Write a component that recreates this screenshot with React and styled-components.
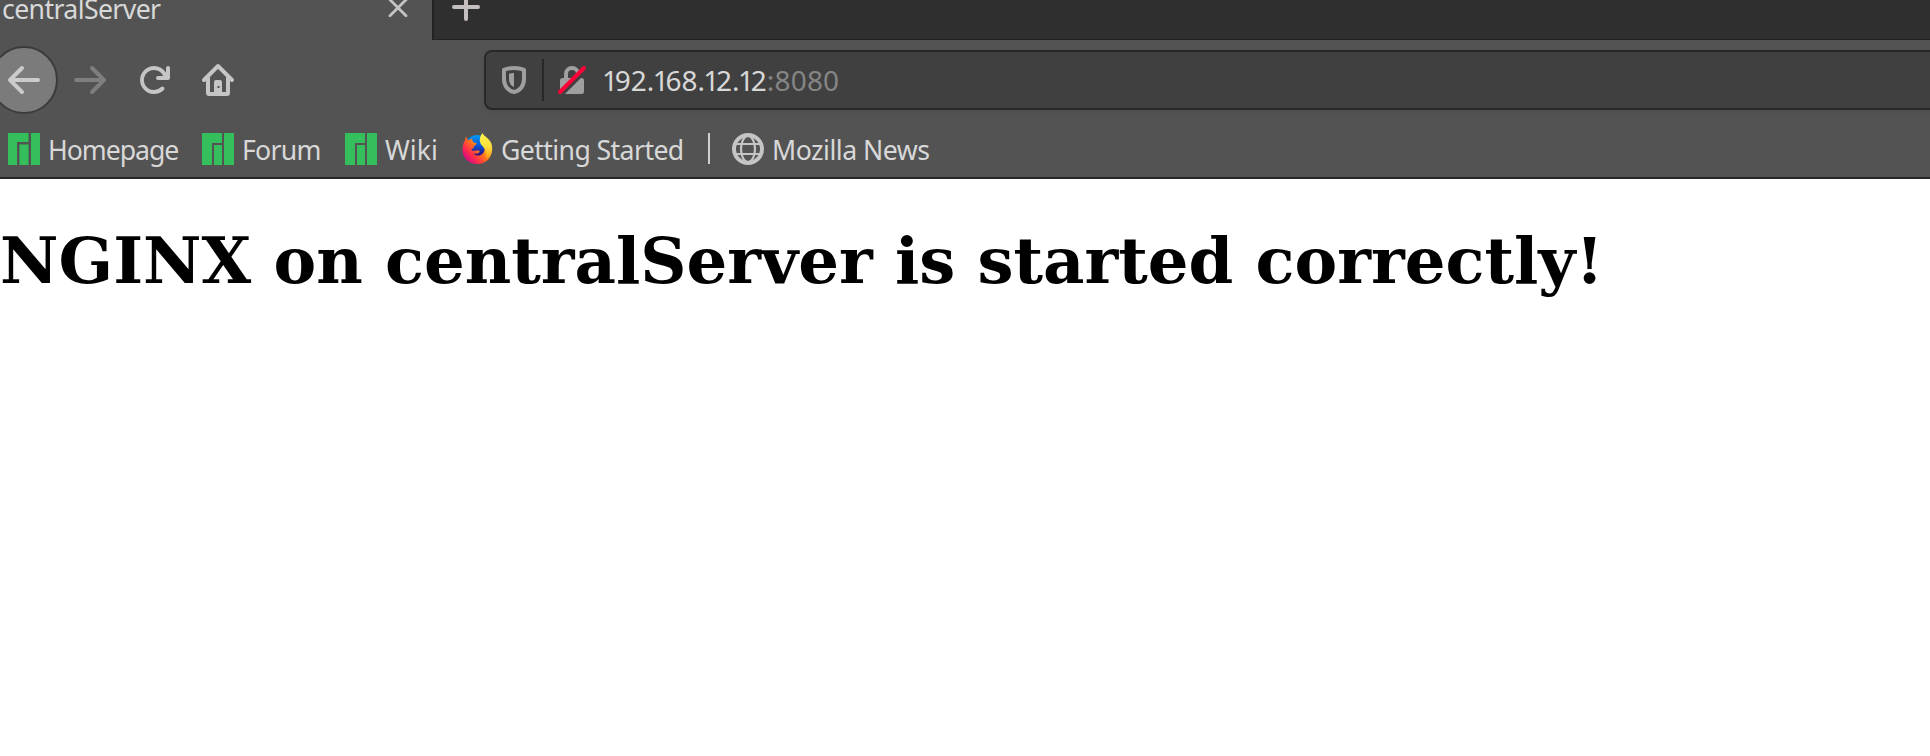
import React from 'react';
import styled, { createGlobalStyle } from 'styled-components';

const Global = createGlobalStyle`
  html, body { margin: 0; background: #fff; overflow: hidden; }
  * { box-sizing: border-box; }
`;

const Window = styled.div`
  width: 100%;
  height: 756px;
  overflow: hidden;
  background: #fff;
  font-family: "Noto Sans", "DejaVu Sans", sans-serif;
  color: #d8d8d8;
`;
const TabStrip = styled.div`
  display: flex;
  height: 40px;
  background: #2f2f2f;
`;
const ActiveTab = styled.div`
  display: flex;
  justify-content: space-between;
  width: 432px;
  height: 40px;
  padding: 0 24px 0 2px;
  background: #535353;
`;
const TabTitle = styled.span`
  font-size: 26.67px;
  line-height: 36px;
  margin-top: -9px;
  letter-spacing: -0.62px;
`;
const StripRest = styled.div`
  flex: 1;
  height: 40px;
  padding-left: 18px;
  border-left: 2px solid #222;
  border-bottom: 1px solid #222;
`;
const Icon = styled.svg`
  display: block;
  flex: none;
  overflow: visible;
`;
const NavBar = styled.div`
  display: flex;
  align-items: center;
  height: 80px;
  background: #535353;
`;
const NavButtons = styled.div`
  display: flex;
  align-items: center;
  width: 484px;
  flex: none;
`;
const BackButton = styled.div`
  display: flex;
  align-items: center;
  justify-content: center;
  flex: none;
  width: 68px;
  height: 68px;
  margin-left: -10px;
  border: 2px solid #3b3b3b;
  border-radius: 50%;
  background: #7b7b7b;
`;
const NavButton = styled.div`
  width: 32px;
  margin-left: ${p => p.$gap}px;
`;
const UrlBar = styled.div`
  display: flex;
  align-items: center;
  flex: 1;
  height: 60px;
  margin-right: -12px;
  padding-left: 14px;
  border: 2px solid #282828;
  border-radius: 8px;
  background: #404040;
  box-shadow: 0 2px 8px rgba(0, 0, 0, 0.06);
`;
const UrlDivider = styled.div`
  width: 2px;
  height: 42px;
  margin: 0 12px 0 14px;
  background: #282828;
`;
const Address = styled.div`
  margin-left: 14px;
  font-size: 28px;
  line-height: 40px;
  white-space: nowrap;
`;
const Kern = styled.span`
  letter-spacing: ${p => p.$by}px;
`;
const Port = styled.span`
  color: #858585;
  letter-spacing: 0.2px;
`;
const Bookmarks = styled.div`
  display: flex;
  align-items: center;
  height: 59px;
  padding: 0 0 0 8px;
  border-bottom: 2px solid #272727;
  background: #535353;
`;
const Bookmark = styled.div`
  display: flex;
  align-items: center;
  flex: none;
  width: ${p => p.$width}px;
  height: 36px;
`;
const BookmarkLabel = styled.span`
  margin-left: 8px;
  padding-top: 2px;
  font-size: 26.67px;
  line-height: 36px;
  letter-spacing: ${p => p.$spacing || 0}px;
  white-space: nowrap;
`;
const BookmarkDivider = styled.div`
  width: 2px;
  height: 31px;
  margin-right: 22px;
  background: #d0d0d0;
`;
const Content = styled.main`
  padding-top: 44px;
`;
const Heading = styled.h1`
  margin: 0;
  color: #000;
  font: bold 64px/75px "DejaVu Serif", serif;
  white-space: nowrap;
`;

const ARROW = 'M15 7H3.414l4.293-4.293a1 1 0 0 0-1.414-1.414l-6 6a1 1 0 0 0 0 1.414l6 6a1 1 0 0 0 1.414-1.414L3.414 9H15a1 1 0 0 0 0-2z';

const Manjaro = ({ soft }) => (
  <Icon width="32" height="32" viewBox="0 0 32 32" fill="#35bf5c" shapeRendering="crispEdges">
    {soft ? (
      <>
        <path d="M11 11h10v21H11zM20 0h1v9h-1z" fill="#3f8f55" />
        <path d="M0 0h20v9H9v23H0zM12 12h8v20h-8zM23 0h9v32h-9z" />
      </>
    ) : (
      <path d="M0 0h20v10H10v22H0zM12 12h8v20h-8zM22 0h10v32H22z" />
    )}
  </Icon>
);

const Firefox = () => (
  <Icon width="32" height="32" viewBox="0 0 32 32">
    <defs>
      <linearGradient id="body" x1="28" y1="5" x2="4" y2="27" gradientUnits="userSpaceOnUse">
        <stop offset="0" stopColor="#fff44f" />
        <stop offset=".3" stopColor="#ffb21c" />
        <stop offset=".52" stopColor="#ff6b20" />
        <stop offset=".75" stopColor="#ff2a4e" />
        <stop offset="1" stopColor="#d0068c" />
      </linearGradient>
      <linearGradient id="globe" x1="19" y1="2" x2="17" y2="22" gradientUnits="userSpaceOnUse">
        <stop offset="0" stopColor="#009ff0" />
        <stop offset=".45" stopColor="#0560e0" />
        <stop offset="1" stopColor="#2a1080" />
      </linearGradient>
      <linearGradient id="flame" x1="24" y1="1" x2="26" y2="26" gradientUnits="userSpaceOnUse">
        <stop offset="0" stopColor="#fff44f" />
        <stop offset=".5" stopColor="#ffe03a" />
        <stop offset="1" stopColor="#ff9a16" />
      </linearGradient>
    </defs>
    <circle cx="16" cy="14.500" r="12.500" fill="url(#globe)" />
    <path d="M1.500 17C1.500 13 2.500 9.500 4 7.500C4.100 5.800 4.600 4.500 5.500 3.500C5.600 5.300 6.200 6.400 7.200 7.200C8.500 6.500 10 6.500 11.300 5.300C11 7 11.500 8.500 12.500 9.500L15.500 10C15.600 11.800 14 12.700 12.700 13.400L12.900 15.700C11.300 15.200 9.900 16 10.700 17.200C12.500 18.700 15 17 18.300 17.800C19.300 18.300 18.500 20 16.500 20.500C14.500 21 13 20.500 12 20C14 22.500 17 23.200 20 22C24 20 24.500 15 22.500 11L31 13C32.500 23 26 31 16.500 31C8 31 1.500 25 1.500 17z" fill="url(#body)" />
    <path d="M21.500 0C22.800 3.500 29 5.500 30.500 11C31.800 16 30 22 25.500 25.500C26 19 24 15.500 21 12.500C18 9 18 4.500 21.500 0z" fill="url(#flame)" />
  </Icon>
);

const Globe = () => (
  <Icon width="32" height="32" viewBox="0 0 32 32" fill="none" stroke="#c5c5c5">
    <circle cx="16" cy="16" r="14" strokeWidth="4" />
    <ellipse cx="16" cy="16" rx="7" ry="13" strokeWidth="2.200" />
    <path d="M3 11h26M3 21h26" strokeWidth="2" />
  </Icon>
);

const KERNING = { 1: -3.3, '.': -1.6 };
const Host = ({ children }) =>
  children.split(/([1.])/).filter(Boolean).map((part, i) => (
    <Kern key={i} $by={KERNING[part] || 0}>{part}</Kern>
  ));

export default function App() {
  return (
    <Window>
      <Global />
      <TabStrip>
        <ActiveTab>
          <TabTitle>centralServer</TabTitle>
          <Icon width="20" height="20" viewBox="0 0 20 20" stroke="#c5c5c5" strokeWidth="2.800" strokeLinecap="round">
            <path d="M2-.2l16 16M18-.2l-16 16" />
          </Icon>
        </ActiveTab>
        <StripRest>
          <Icon width="28" height="22" viewBox="0 0 28 22" stroke="#c5bebe" strokeWidth="4" strokeLinecap="round">
            <path d="M2 7h24M14-5v24" />
          </Icon>
        </StripRest>
      </TabStrip>
      <NavBar>
        <NavButtons>
          <BackButton>
            <Icon width="32" height="32" viewBox="0 0 16 16" fill="#cbcbcb"><path d={ARROW} /></Icon>
          </BackButton>
          <NavButton $gap={16}>
            <Icon width="32" height="32" viewBox="0 0 16 16" fill="#7e7e7e"><path d={ARROW} transform="matrix(-1 0 0 1 16 0)" /></Icon>
          </NavButton>
          <NavButton $gap={32}>
            <Icon width="32" height="32" viewBox="0 0 16 16" fill="#c5c5c5">
              <path d="M15 1a1 1 0 0 0-1 1v2.418A6.995 6.995 0 1 0 8 15a6.954 6.954 0 0 0 4.95-2.05 1 1 0 0 0-1.414-1.414A5.019 5.019 0 1 1 12.549 6H10a1 1 0 0 0 0 2h5a1 1 0 0 0 1-1V2a1 1 0 0 0-1-1z" />
            </Icon>
          </NavButton>
          <NavButton $gap={32}>
            <Icon width="32" height="32" viewBox="0 0 32 32" fill="none" stroke="#c5c5c5" strokeWidth="4" strokeLinecap="round" strokeLinejoin="round">
              <path d="M2 16L16 2l14 14M6 14v15q0 1 1 1h18q1 0 1-1V14" />
              <path fill="#c5c5c5" stroke="none" fillRule="evenodd" d="M12 30V18q0-2 2-2h4q2 0 2 2v12zM15.500 22v2h2v-2z" />
            </Icon>
          </NavButton>
        </NavButtons>
        <UrlBar>
          <Icon width="28" height="32" viewBox="0 0 28 32">
            <path d="M14 4c4 0 7.500.7 10 1.800V15c0 6.500-3.800 12-10 13C7.800 27 4 21.500 4 15V5.800C6.500 4.700 10 4 14 4z" fill="none" stroke="#9f9f9f" strokeWidth="4" strokeLinejoin="round" />
            <path d="M14 9c-2 0-3.500.3-5 .8V15c0 4 2 7 5 8z" fill="#9f9f9f" />
          </Icon>
          <UrlDivider />
          <Icon width="32" height="32" viewBox="0 0 32 32">
            <path d="M10 16v-6a6 6 0 0 1 12 0v6" fill="none" stroke="#9f9f9f" strokeWidth="4" />
            <rect x="4" y="14" width="24" height="16" rx="2.500" fill="#9f9f9f" />
            <path d="M6 30L30 6" stroke="#404040" strokeWidth="4" />
            <path d="M4 28L28 4" stroke="#ff0039" strokeWidth="4" strokeLinecap="round" />
          </Icon>
          <Address><Host>192.168.12.12</Host><Port>:8080</Port></Address>
        </UrlBar>
      </NavBar>
      <Bookmarks>
        <Bookmark $width={194}><Manjaro soft /><BookmarkLabel $spacing={-1.05}>Homepage</BookmarkLabel></Bookmark>
        <Bookmark $width={143}><Manjaro /><BookmarkLabel $spacing={-0.75}>Forum</BookmarkLabel></Bookmark>
        <Bookmark $width={116}><Manjaro /><BookmarkLabel>Wiki</BookmarkLabel></Bookmark>
        <Bookmark $width={247}><Firefox /><BookmarkLabel $spacing={-0.6}>Getting Started</BookmarkLabel></Bookmark>
        <BookmarkDivider />
        <Bookmark $width={240}><Globe /><BookmarkLabel $spacing={-0.5}>Mozilla News</BookmarkLabel></Bookmark>
      </Bookmarks>
      <Content>
        <Heading>NGINX on centralServer is started correctly!</Heading>
      </Content>
    </Window>
  );
}
